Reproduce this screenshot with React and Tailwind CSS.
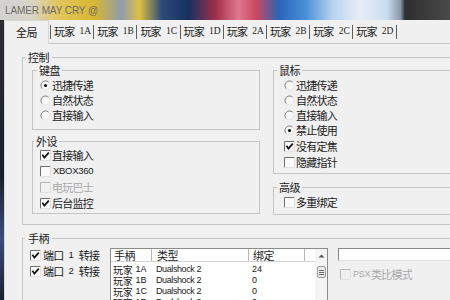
import React from "react";

function Radio({ checked }) {
  return (
    <svg width="11" height="11" viewBox="0 0 11 11" className="shrink-0">
      <circle cx="5.5" cy="5.5" r="4.5" fill="#f7f7f7" />
      <path d="M2.3 8.7 A4.5 4.5 0 0 1 8.7 2.3" stroke="#7a7a7a" fill="none" strokeWidth="1" />
      <path d="M8.7 2.3 A4.5 4.5 0 0 1 2.3 8.7" stroke="#e4e4e4" fill="none" strokeWidth="1" />
      {checked && <circle cx="5.5" cy="5.5" r="1.6" fill="#111" />}
    </svg>
  );
}

function Check({ checked, disabled }) {
  return (
    <svg width="11" height="11" viewBox="0 0 11 11" className="shrink-0">
      <rect x="0.5" y="0.5" width="10" height="10" fill={disabled ? "#f0f0f0" : "#fafafa"} />
      <path d="M0.5 10.5 V0.5 H10.5" stroke={disabled ? "#b4b4b4" : "#6e6e6e"} fill="none" />
      <path d="M10.5 0.5 V10.5 H0.5" stroke="#e2e2e2" fill="none" />
      {checked && <path d="M2.4 4.8 L4.4 7.6 L8.8 2.6" stroke="#111" strokeWidth="1.7" fill="none" />}
    </svg>
  );
}

function Opt({ kind, checked, disabled, latin, children }) {
  return (
    <div className="flex items-center h-full gap-[1px]">
      {kind === "radio" ? <Radio checked={checked} /> : <Check checked={checked} disabled={disabled} />}
      {latin ? (
        <span className={"ml-[1px] text-[9.5px] tracking-[-0.3px] leading-none font-[family-name:'Liberation_Sans',sans-serif] " + (disabled ? "text-[#a8a8a8]" : "text-[#1a1a1a]")}>
          {children}
        </span>
      ) : (
        <span className={"text-[11px] tracking-[-0.75px] leading-none " + (disabled ? "text-[#a8a8a8]" : "text-[#1a1a1a]")}>
          {children}
        </span>
      )}
    </div>
  );
}

const tabs = ["1A", "1B", "1C", "1D", "2A", "2B", "2C", "2D"];
const rows = [
  ["1A", "24"],
  ["1B", "0"],
  ["1C", "0"],
  ["1D", "0"],
];

export default function App() {
  return (
    <div className="w-[450px] h-[300px] overflow-hidden flex flex-col bg-[#f0f0f0] text-[#1a1a1a] font-[family-name:'Noto_Sans_CJK_SC',sans-serif]">
      {/* title bar with blurred wallpaper */}
      <div className="h-[20px] shrink-0 flex items-center pl-[5px] bg-[linear-gradient(90deg,#d2d2d2_0%,#d8d4c6_7%,#e2c65a_13%,#d9b632_21%,#8f9cab_27%,#dfbf42_31%,#2a4a7a_36%,#173060_42%,#a33048_48%,#e07890_53%,#c84860_57%,#2a64b8_62%,#4a90d8_68%,#b8d4f0_74%,#e8eef6_80%,#c8dcf0_86%,#8a96a8_89%,#2e2e2e_90%,#4a4a4a_100%)]">
        <span className="text-[10px] text-[#6c6c6c] font-[family-name:'Liberation_Sans',sans-serif] tracking-[-0.1px]">LAMER MAY CRY @</span>
      </div>

      <div className="flex flex-1 min-h-0">
        <div className="w-[4px] shrink-0 bg-[linear-gradient(180deg,#2c2c32_0%,#1a1e2a_55%,#3a4c78_78%,#1c2030_100%)]" />
        <div className="w-[480px] shrink-0 flex flex-col bg-[#f0f0f0]">
          {/* tab row */}
          <div className="flex h-[24px] shrink-0">
            <div className="w-[45px] border-l border-t border-r border-[#d6d6d6] flex items-center justify-center text-[11px] tracking-[-0.5px]">
              全局
            </div>
            <div className="flex-1 border-b border-[#c6c6c6] flex items-center pl-[1px]">
              {tabs.map((t) => (
                <div key={t} className="w-[43.2px] h-[14px] border-l border-[#5e5e5e] flex items-center pl-[3px]">
                  <span className="text-[11px] tracking-[-0.75px] leading-none">玩家</span>
                  <span className="ml-[5px] text-[9.5px] leading-none font-[family-name:'Liberation_Serif',serif] text-[#222]">{t}</span>
                </div>
              ))}
              <div className="h-[14px] border-l border-[#5e5e5e]" />
            </div>
          </div>

          {/* tab panel */}
          <div className="flex-1 border-l border-[#d6d6d6] pl-[17px]">
            {/* 控制 */}
            <fieldset className="mt-[7px] w-[470px] border border-[#c4c4c4]">
              <legend className="ml-[2px] px-[3px] text-[11px] leading-[12px] tracking-[-0.5px]">控制</legend>
              <div className="flex items-start pl-[9px] pt-[1px] pb-[9px]">
                {/* left column */}
                <div className="w-[228px] flex flex-col">
                  <fieldset className="w-[228px] border border-[#c4c4c4]">
                    <legend className="ml-[4px] px-[2px] text-[11px] leading-[12px] tracking-[-0.5px]">键盘</legend>
                    <div className="pl-[7px] pt-[2px] pb-[6px] flex flex-col">
                      <div className="h-[15px]"><Opt kind="radio" checked>迅捷传递</Opt></div>
                      <div className="h-[15px]"><Opt kind="radio">自然状态</Opt></div>
                      <div className="h-[15px]"><Opt kind="radio">直接输入</Opt></div>
                    </div>
                  </fieldset>
                  <fieldset className="mt-[5px] w-[228px] border border-[#c4c4c4]">
                    <legend className="ml-[1px] px-[2px] text-[11px] leading-[12px] tracking-[-0.5px]">外设</legend>
                    <div className="pl-[7px] pb-[2px] flex flex-col">
                      <div className="h-[16px]"><Opt kind="check" checked>直接输入</Opt></div>
                      <div className="h-[16px]"><Opt kind="check" latin>XBOX360</Opt></div>
                      <div className="h-[16px]"><Opt kind="check" disabled>电玩巴士</Opt></div>
                      <div className="h-[16px]"><Opt kind="check" checked>后台监控</Opt></div>
                    </div>
                  </fieldset>
                </div>

                {/* right column */}
                <div className="ml-[13px] w-[200px] flex flex-col">
                  <fieldset className="w-[200px] border border-[#c4c4c4]">
                    <legend className="ml-[3px] px-[2px] text-[11px] leading-[12px] tracking-[-0.5px]">鼠标</legend>
                    <div className="pl-[10px] pt-[2px] pb-[3px] flex flex-col">
                      <div className="h-[15px]"><Opt kind="radio">迅捷传递</Opt></div>
                      <div className="h-[15px]"><Opt kind="radio">自然状态</Opt></div>
                      <div className="h-[15px]"><Opt kind="radio">直接输入</Opt></div>
                      <div className="h-[15px]"><Opt kind="radio" checked>禁止使用</Opt></div>
                      <div className="h-[16px]"><Opt kind="check" checked>没有定焦</Opt></div>
                      <div className="h-[16px]"><Opt kind="check">隐藏指针</Opt></div>
                    </div>
                  </fieldset>
                  <fieldset className="mt-[7px] w-[200px] border border-[#c4c4c4]">
                    <legend className="ml-[3px] px-[2px] text-[11px] leading-[12px] tracking-[-0.5px]">高级</legend>
                    <div className="pl-[10px] pt-[2px] pb-[4px] flex flex-col">
                      <div className="h-[15px]"><Opt kind="check">多重绑定</Opt></div>
                    </div>
                  </fieldset>
                </div>
              </div>
            </fieldset>

            {/* 手柄 */}
            <fieldset className="mt-[7px] w-[470px] border border-[#c4c4c4]">
              <legend className="ml-[2px] px-[3px] text-[11px] leading-[12px] tracking-[-0.5px]">手柄</legend>
              <div className="flex items-start">
                <div className="w-[87px] pl-[7px] mt-[3px] flex flex-col">
                  <div className="h-[16px]">
                    <div className="flex items-center h-full gap-[2px]">
                      <Check checked />
                      <span className="text-[11px] tracking-[-0.75px] leading-none">端口</span>
                      <span className="mx-[3px] text-[9.5px] leading-none font-[family-name:'Liberation_Sans',sans-serif]">1</span>
                      <span className="text-[11px] tracking-[-0.75px] leading-none">转接</span>
                    </div>
                  </div>
                  <div className="h-[16px]">
                    <div className="flex items-center h-full gap-[2px]">
                      <Check checked />
                      <span className="text-[11px] tracking-[-0.75px] leading-none">端口</span>
                      <span className="mx-[3px] text-[9.5px] leading-none font-[family-name:'Liberation_Sans',sans-serif]">2</span>
                      <span className="text-[11px] tracking-[-0.75px] leading-none">转接</span>
                    </div>
                  </div>
                </div>

                {/* list view */}
                <div className="mt-[4px] w-[218px] h-[70px] border border-[#8c8c8c] bg-white flex">
                  <div className="flex-1 flex flex-col">
                    <div className="flex h-[13px] border-b border-[#d2d2d2] text-[11px] leading-[12px] tracking-[-0.5px]">
                      <div className="w-[41px] pl-[3px] border-r border-[#b8b8b8]">手柄</div>
                      <div className="w-[97px] pl-[5px] border-r border-[#b8b8b8]">类型</div>
                      <div className="w-[56px] pl-[4px] border-r border-[#b8b8b8]">绑定</div>
                      <div className="flex-1" />
                    </div>
                    <div className="pt-[2px] flex flex-col">
                      {rows.map(([id, b]) => (
                        <div key={id} className="h-[11px] flex items-center">
                          <div className="w-[41px] pl-[2px] flex items-center">
                            <span className="text-[10px] tracking-[-0.3px] leading-[11px]">玩家</span>
                            <span className="ml-[3px] text-[9px] leading-[11px] font-[family-name:'Liberation_Sans',sans-serif]">{id}</span>
                          </div>
                          <div className="w-[97px] pl-[4px] text-[9px] leading-[11px] tracking-[-0.4px] font-[family-name:'Liberation_Sans',sans-serif]">Dualshock 2</div>
                          <div className="w-[56px] pl-[3px] text-[9px] leading-[11px] font-[family-name:'Liberation_Sans',sans-serif]">{b}</div>
                        </div>
                      ))}
                    </div>
                  </div>
                  {/* scrollbar */}
                  <div className="w-[12px] bg-[#f4f4f4] flex flex-col items-center">
                    <div className="h-[13px] w-full flex items-center justify-center">
                      <svg width="7" height="4" viewBox="0 0 7 4"><path d="M0.5 3.5 L3.5 0.5 L6.5 3.5 Z" fill="#555" /></svg>
                    </div>
                    <div className="mt-[4px] w-[9px] h-[12px] border border-[#9a9a9a] rounded-[2px] bg-[#eaeaea] flex flex-col items-center justify-center gap-[1px]">
                      <div className="w-[5px] h-[1px] bg-[#666]" />
                      <div className="w-[5px] h-[1px] bg-[#666]" />
                      <div className="w-[5px] h-[1px] bg-[#666]" />
                    </div>
                  </div>
                </div>

                {/* right side */}
                <div className="ml-[10px] flex flex-col">
                  <div className="mt-[4px] w-[130px] h-[13px] bg-white border-t border-l border-[#8a8a8a] border-r border-b border-r-[#e0e0e0] border-b-[#e0e0e0]" />
                  <div className="mt-[5px] h-[16px] pl-[2px]">
                    <div className="flex items-center h-full gap-[1px]">
                      <Check disabled />
                      <span className="ml-[1px] text-[9px] leading-none tracking-[-0.3px] text-[#a8a8a8] font-[family-name:'Liberation_Sans',sans-serif]">PSX</span>
                      <span className="text-[11px] tracking-[-0.75px] leading-none text-[#a8a8a8]">类比模式</span>
                    </div>
                  </div>
                </div>
              </div>
            </fieldset>
          </div>
        </div>
      </div>
    </div>
  );
}
